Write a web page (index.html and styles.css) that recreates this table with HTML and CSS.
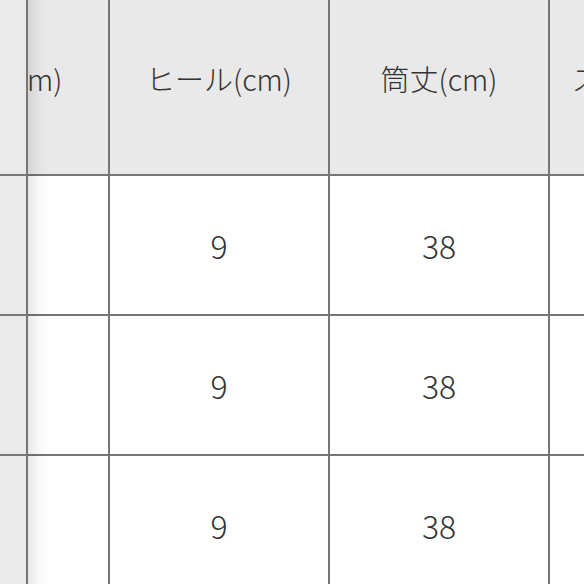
FILE: index.html
```html
<!DOCTYPE html>
<html lang="ja">
<head>
<meta charset="utf-8">
<link rel="stylesheet" href="styles.css">
</head>
<body>
<div class="frame">
  <div class="fixed-col">
    <div class="fcell"></div>
    <div class="fcell"></div>
    <div class="fcell"></div>
    <div class="fcell"></div>
  </div>
  <div class="viewport">
    <div class="shadow"></div>
    <div class="grid">
      <div class="cell head first">足幅(cm)</div>
      <div class="cell head">ヒール(cm)</div>
      <div class="cell head">筒丈(cm)</div>
      <div class="cell head">スリット(cm)</div>

      <div class="cell"></div>
      <div class="cell">9</div>
      <div class="cell">38</div>
      <div class="cell"></div>

      <div class="cell"></div>
      <div class="cell">9</div>
      <div class="cell">38</div>
      <div class="cell"></div>

      <div class="cell"></div>
      <div class="cell">9</div>
      <div class="cell">38</div>
      <div class="cell"></div>
    </div>
  </div>
</div>
</body>
</html>
```
FILE: styles.css
```css
html, body {
  margin: 0;
  padding: 0;
  background: #ffffff;
}
.frame {
  display: flex;
  width: 584px;
  height: 584px;
  overflow: hidden;
  font-family: "Noto Sans CJK JP", "Noto Sans", sans-serif;
  font-weight: 300;
  color: #333333;
}
.fixed-col {
  flex: 0 0 26px;
  display: grid;
  grid-template-rows: 174px 138px 138px 138px;
  row-gap: 2px;
  background: #767676;
  border-right: 2px solid #767676;
  align-content: start;
}
.fcell {
  background: #eaeaea;
}
.viewport {
  flex: 1;
  position: relative;
  overflow: hidden;
}
.shadow {
  position: absolute;
  left: 0;
  top: 0;
  bottom: 0;
  width: 20px;
  background: linear-gradient(to right, rgba(0, 0, 0, 0.09), rgba(0, 0, 0, 0.03) 50%, rgba(0, 0, 0, 0));
  z-index: 2;
}
.grid {
  display: grid;
  grid-template-columns: 218px 218px 218px 218px;
  grid-template-rows: 174px 138px 138px 138px;
  gap: 2px;
  background: #767676;
  margin-left: -138px;
  width: max-content;
}
.cell {
  background: #ffffff;
  display: flex;
  align-items: center;
  justify-content: center;
  font-size: 32px;
  white-space: nowrap;
}
.cell.head {
  background: #e9e9e9;
  font-size: 29px;
  padding-bottom: 18px;
}
.cell.head.first {
  padding-left: 10px;
}
```
